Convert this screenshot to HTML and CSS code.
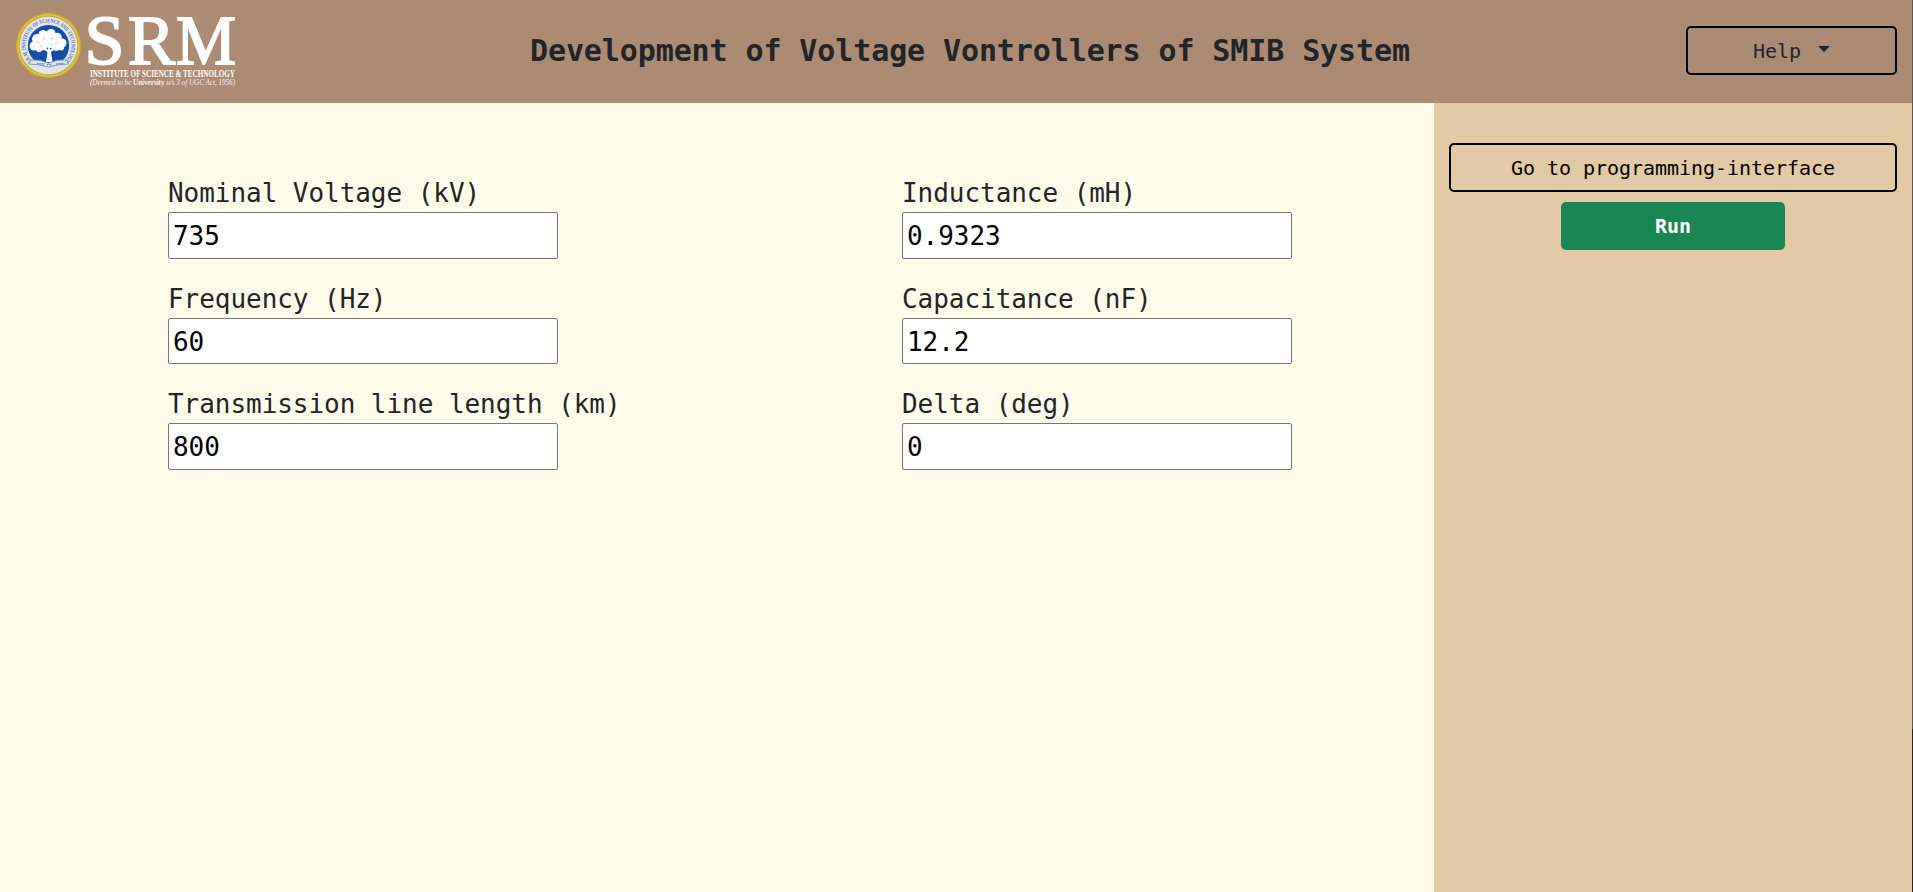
FILE: index.html
```html
<!DOCTYPE html>
<html lang="en">
<head>
<meta charset="utf-8">
<title>Development of Voltage Vontrollers of SMIB System</title>
<link rel="stylesheet" href="styles.css">
</head>
<body>
<div class="page">
  <header class="topbar">
    <svg class="logo" viewBox="0 0 240 103" role="img" aria-label="SRM Institute of Science and Technology">
      <defs>
        <path id="ring" d="M32.200 61.800A23 23 0 1 1 64.800 61.800"/>
      </defs>
      <circle cx="48.5" cy="45.5" r="32.5" fill="#cfae2c"/>
      <circle cx="48.5" cy="45.5" r="30.6" fill="none" stroke="#e8d36a" stroke-width=".8"/>
      <circle cx="48.5" cy="45.5" r="28.8" fill="#e2e4e8"/>
      <circle cx="48.5" cy="45.5" r="20.6" fill="#134fa5"/>
      <text class="ring-text"><textPath href="#ring" textLength="107" lengthAdjust="spacingAndGlyphs">S.R.M. INSTITUTE OF SCIENCE AND TECHNOLOGY</textPath></text>
      <g fill="#fff">
        <path d="M46 62l1.500-10-7-4.500 1-1 6.500 3 .5-5 1.500 5 6-3 1 1-6 4.500 1.500 10z"/>
        <circle cx="34" cy="46" r="4.500"/><circle cx="37" cy="39" r="5"/>
        <circle cx="43" cy="34.500" r="4.500"/><circle cx="51" cy="33.500" r="4.500"/>
        <circle cx="57" cy="37.500" r="4.800"/><circle cx="62" cy="43" r="4.500"/>
        <circle cx="42" cy="44.500" r="6"/><circle cx="50" cy="41" r="7"/>
        <circle cx="56" cy="46" r="5"/><circle cx="39" cy="49" r="3"/>
        <circle cx="61" cy="47.500" r="3"/>
      </g>
      <path d="M36 41l3 2M43 37l2 3M53 37l-2 3M58 42l-3 2M40 47l3-1M50 44l3 2M33 46l2 1" fill="none" stroke="#8fb0de" stroke-width=".6"/>
      <path d="M31 60q8-1 17.500 3q9-4 18-3l2 4q-10 0-20 3q-10-3-20-3z" fill="#e2e4e8" stroke="#5b82be" stroke-width=".8"/>
      <path d="M37 63.500l7 .6M47 64.500h5M56 64l8-.6" stroke="#5b82be" stroke-width="1.500" stroke-dasharray="1 .6"/>
      <text class="srm" x="84.500" y="63.500" textLength="40" lengthAdjust="spacingAndGlyphs">S</text>
      <text class="srm" x="128" y="63.500" textLength="47" lengthAdjust="spacingAndGlyphs">R</text>
      <text class="srm" x="176" y="63.500" textLength="60" lengthAdjust="spacingAndGlyphs">M</text>
      <text class="institute" x="90" y="76.500" textLength="145" lengthAdjust="spacingAndGlyphs">INSTITUTE OF SCIENCE &amp; TECHNOLOGY</text>
      <text class="deemed" x="90" y="85" textLength="145" lengthAdjust="spacingAndGlyphs">(Deemed to be <tspan class="strong">University</tspan> u/s 3 of UGC Act, 1956)</text>
    </svg>
    <h1 class="title">Development of Voltage Vontrollers of SMIB System</h1>
    <button class="btn help">Help<span class="caret"></span></button>
  </header>
  <main class="content">
    <form class="fields">
      <div class="column">
        <label class="field">Nominal Voltage (kV)<input class="value" value="735"></label>
        <label class="field">Frequency (Hz)<input class="value" value="60"></label>
        <label class="field">Transmission line length (km)<input class="value" value="800"></label>
      </div>
      <div class="column">
        <label class="field">Inductance (mH)<input class="value" value="0.9323"></label>
        <label class="field">Capacitance (nF)<input class="value" value="12.2"></label>
        <label class="field">Delta (deg)<input class="value" value="0"></label>
      </div>
    </form>
    <aside class="sidebar">
      <button class="btn">Go to programming-interface</button>
      <button class="btn run">Run</button>
    </aside>
  </main>
</div>
<div class="edge"></div>
</body>
</html>
```
FILE: styles.css
```css
* { box-sizing: border-box; }

body {
  margin: 0;
  display: flex;
  height: 100vh;
  overflow: hidden;
  color: #212529;
  font-family: "DejaVu Sans Mono", monospace;
  letter-spacing: -0.003em;
}

.page {
  flex: 1;
  display: flex;
  flex-direction: column;
}

.edge {
  width: 1px;
  background: linear-gradient(#5b5856 0 729px, #2c231c 729px);
}

.topbar {
  display: grid;
  grid-template-columns: 240px 1fr 226px;
  height: 103px;
  background: #ad8b73;
}

.logo {
  width: 240px;
  height: 103px;
  overflow: visible;
  letter-spacing: 0;
  font-family: "Liberation Serif", serif;
}

.srm { font-size: 70px; fill: #fff; stroke: #fff; stroke-width: 1.8px; }
.institute { font-size: 10.5px; font-weight: bold; fill: #fff; }
.deemed { font-size: 8.5px; font-style: italic; fill: #f8f3ef; }
.strong { font-weight: bold; font-style: normal; }
.ring-text { font-size: 5.5px; font-weight: bold; fill: #4a72b4; }

.title {
  margin: 33px 0 0 290px;
  font-size: 30px;
  line-height: 36px;
  letter-spacing: -0.0035em;
  white-space: nowrap;
}

.btn {
  height: 49px;
  padding: 0;
  border: 2px solid #000;
  border-radius: 5px;
  background: transparent;
  color: #000;
  font: 20px/30px "DejaVu Sans Mono", monospace;
  letter-spacing: -0.002em;
}

.help {
  display: flex;
  align-items: center;
  justify-content: center;
  gap: 17px;
  width: 211px;
  margin-top: 26px;
  color: #212529;
}

.caret {
  border: 6px solid transparent;
  border-top-color: #212529;
  border-bottom: 0;
  margin-bottom: 3px;
}

.content {
  flex: 1;
  display: flex;
  background: #fffbe9;
}

.fields {
  flex: 1;
  display: flex;
  gap: 344px;
  padding: 71px 0 0 168px;
}

.column {
  display: flex;
  flex-direction: column;
  gap: 20px;
  width: 390px;
}

.field {
  display: flex;
  flex-direction: column;
  height: 85.5px;
  font-size: 26px;
  line-height: 38px;
  white-space: nowrap;
}

.value {
  width: 390px;
  height: 46.5px;
  padding: 3px 4px 1px;
  border: 1px solid #767676;
  border-radius: 2px;
  background: #fff;
  color: #000;
  font: 26px "DejaVu Sans Mono", monospace;
  letter-spacing: -0.002em;
}

.sidebar {
  display: flex;
  flex-direction: column;
  gap: 10px;
  width: 478px;
  padding: 40px 15px;
  background: #e3caa5;
}

.run {
  align-self: center;
  width: 224px;
  height: 48px;
  border: 0;
  background: #198754;
  color: #fff;
  font-weight: bold;
}
```
